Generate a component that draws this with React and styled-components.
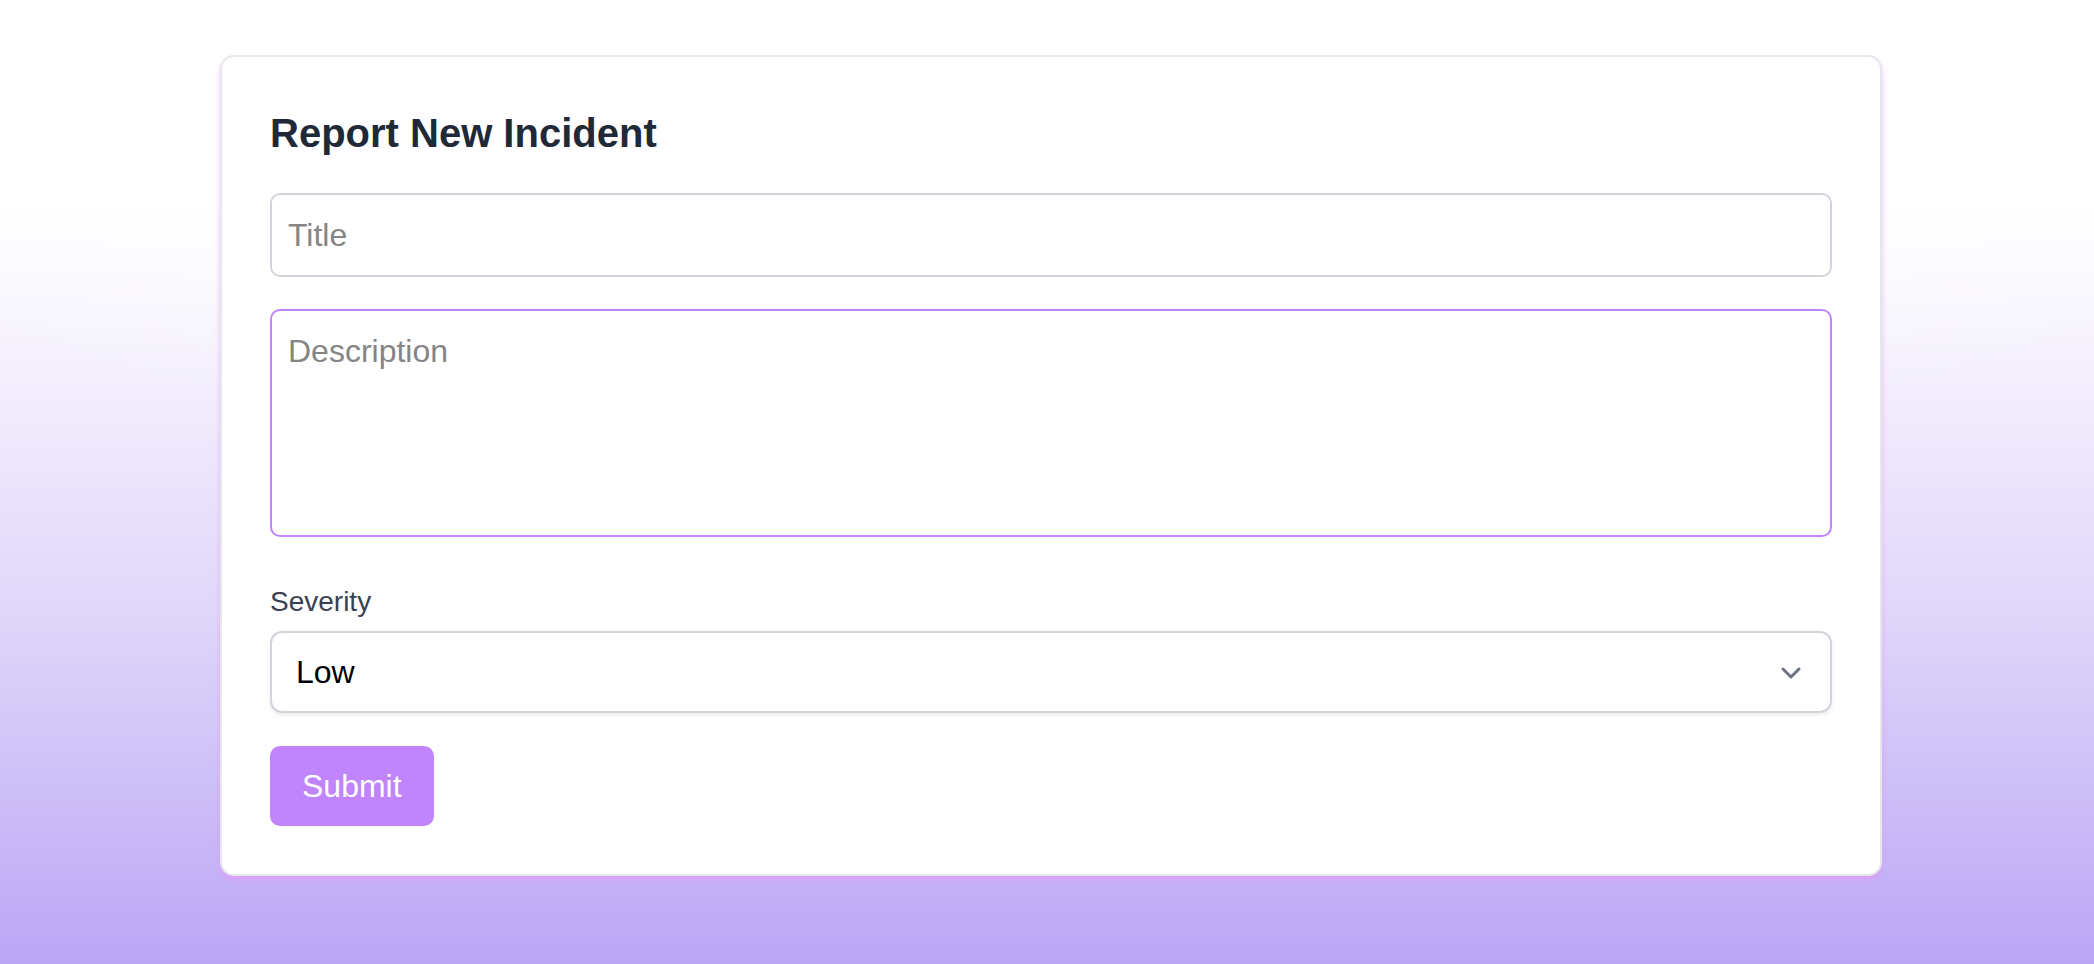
import styled, { createGlobalStyle } from "styled-components"

const GlobalStyle = createGlobalStyle`
  html, body {
    margin: 0;
    padding: 0;
  }
  body {
    font-family: "Liberation Sans", Arial, sans-serif;
  }
  * {
    box-sizing: border-box;
  }
`

const Page = styled.div`
  min-height: 964px;
  padding: 55px 212px 40px 220px;
  background:
    radial-gradient(ellipse 60% 28% at 50% 20%, rgba(255, 255, 255, 1) 0%, rgba(255, 255, 255, 0) 100%),
    linear-gradient(to bottom, #ffffff 0%, #ffffff 21%, #f8f5fe 33%, #ede6fc 48%, #e0d6fa 64%, #cfc1f8 80%, #bba6f6 100%);
`

const Card = styled.form`
  background: #ffffff;
  border: 2px solid #e5e7eb;
  border-radius: 14px;
  padding: 48px;
  box-shadow: 0 5px 7px -2px rgba(232, 150, 250, 0.75), 0 2px 5px -1px rgba(240, 170, 250, 0.35);
  display: flex;
  flex-direction: column;
`

const Heading = styled.h2`
  margin: 0 0 32px;
  font-size: 40px;
  line-height: 56px;
  font-weight: 700;
  color: #1f2937;
`

const fieldBase = `
  display: block;
  width: 100%;
  font-family: "Liberation Sans", Arial, sans-serif;
  font-size: 32px;
  line-height: 48px;
  padding: 16px;
  border-radius: 10px;
  background: #ffffff;
  outline: none;
  &::placeholder {
    color: #858585;
  }
`

const TextInput = styled.input`
  ${fieldBase}
  height: 84px;
  border: 2px solid #d1d5db;
  margin-bottom: 32px;
`

const TextArea = styled.textarea`
  ${fieldBase}
  height: 228px;
  border: 2px solid #c084fc;
  resize: none;
  margin: 0 0 45px;
`

const Label = styled.label`
  display: block;
  font-size: 28px;
  line-height: 40px;
  color: #374151;
  margin-bottom: 9px;
`

const SelectWrap = styled.div`
  position: relative;
  margin-bottom: 33px;
`

const Select = styled.select`
  ${fieldBase}
  appearance: none;
  height: 82px;
  border: 2px solid #d1d5db;
  border-radius: 12px;
  padding: 0 80px 0 24px;
  color: #000000;
  box-shadow: 0 2px 4px rgba(0, 0, 0, 0.08);
`

const Chevron = styled.svg`
  position: absolute;
  right: 31px;
  top: 36px;
  width: 20px;
  height: 12px;
  pointer-events: none;
`

const SubmitButton = styled.button`
  align-self: flex-start;
  font-family: "Liberation Sans", Arial, sans-serif;
  font-size: 32px;
  line-height: 48px;
  padding: 16px 32px;
  border: none;
  border-radius: 10px;
  background: #c084fc;
  color: #ffffff;
  cursor: pointer;
`

export default function App() {
  return (
    <>
      <GlobalStyle />
      <Page>
        <Card onSubmit={e => e.preventDefault()}>
          <Heading>Report New Incident</Heading>
          <TextInput type="text" placeholder="Title" />
          <TextArea placeholder="Description" rows={4} />
          <Label htmlFor="severity">Severity</Label>
          <SelectWrap>
            <Select id="severity" defaultValue="low">
              <option value="low">Low</option>
              <option value="medium">Medium</option>
              <option value="high">High</option>
            </Select>
            <Chevron viewBox="0 0 20 12" fill="none">
              <path d="M2 2l8 8 8-8" stroke="#6b7280" strokeWidth="3" strokeLinecap="round" strokeLinejoin="round" />
            </Chevron>
          </SelectWrap>
          <SubmitButton type="submit">Submit</SubmitButton>
        </Card>
      </Page>
    </>
  )
}
